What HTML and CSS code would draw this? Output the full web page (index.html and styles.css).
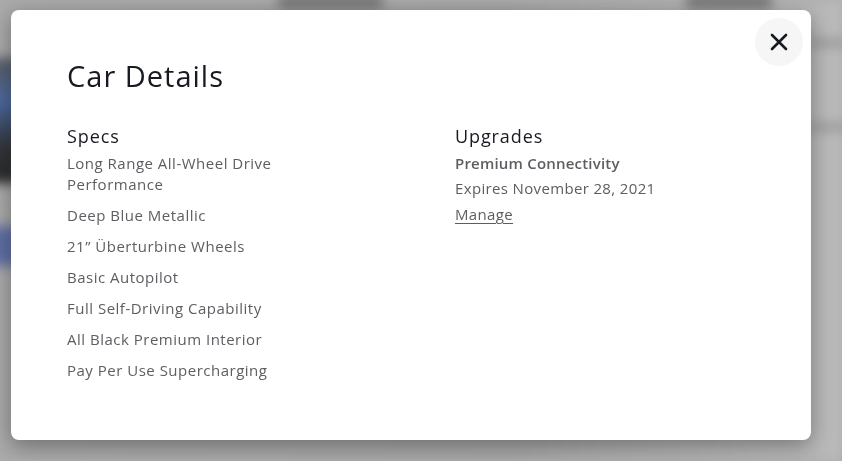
FILE: index.html
```html
<!DOCTYPE html>
<html lang="en">
<head>
    <meta charset="UTF-8">
    <meta name="viewport" content="width=device-width, initial-scale=1.0">
    <title>Car Details</title>
    <link rel="stylesheet" href="styles.css">
</head>
<body>

<!-- blurred page behind the modal -->
<div class="backdrop">
    <div class="bg-title bg-title-1"></div>
    <div class="bg-title bg-title-2"></div>
    <div class="bg-photo"></div>
    <div class="bg-button"></div>
    <div class="bg-line bg-line-1"></div>
    <div class="bg-line bg-line-2"></div>
</div>

<div class="modal-wrap">
    <div class="modal">
        <button class="close-btn" aria-label="Close">
            <svg width="18" height="18" viewBox="0 0 18 18">
                <path d="M2 2 L16 16 M16 2 L2 16" stroke="#171a20" stroke-width="2.6" stroke-linecap="round"/>
            </svg>
        </button>

        <h1 class="modal-title">Car Details</h1>

        <div class="details">
            <div class="details-col">
                <h2 class="col-title">Specs</h2>
                <ul class="spec-list">
                    <li>Long Range All-Wheel Drive Performance</li>
                    <li>Deep Blue Metallic</li>
                    <li>21” Überturbine Wheels</li>
                    <li>Basic Autopilot</li>
                    <li>Full Self-Driving Capability</li>
                    <li>All Black Premium Interior</li>
                    <li>Pay Per Use Supercharging</li>
                </ul>
            </div>
            <div class="details-col">
                <h2 class="col-title">Upgrades</h2>
                <div class="upgrade-name">Premium Connectivity</div>
                <div class="upgrade-text">Expires November 28, 2021</div>
                <a class="upgrade-link" href="#">Manage</a>
            </div>
        </div>
    </div>
</div>

</body>
</html>
```

FILE: styles.css
```css
* {
    margin: 0;
    padding: 0;
    box-sizing: border-box;
}

html, body {
    height: 100%;
    overflow: hidden;
    font-family: "Open Sans", sans-serif;
    background-color: #adadad;
}

/* Blurred page behind the modal */
.backdrop {
    position: fixed;
    inset: 0;
    background: linear-gradient(90deg, #a9a9a9 0%, #a6a6a6 60%, #bababa 100%);
    filter: blur(6px);
}

.bg-title {
    position: absolute;
    top: -4px;
    height: 12px;
    border-radius: 4px;
    background-color: #6e6e6e;
}
.bg-title-1 { left: 278px; width: 105px; }
.bg-title-2 { left: 686px; width: 86px; }

.bg-photo {
    position: absolute;
    left: -20px;
    top: 58px;
    width: 40px;
    height: 125px;
    background: linear-gradient(180deg, #5a5c62 0%, #4d6aa0 35%, #34363c 70%, #2a2a2a 100%);
}

.bg-button {
    position: absolute;
    left: -20px;
    top: 226px;
    width: 40px;
    height: 40px;
    background-color: #5f6fa4;
}

.bg-line {
    position: absolute;
    left: 810px;
    width: 60px;
    height: 6px;
    background-color: #8e8e8e;
}
.bg-line-1 { top: 40px; }
.bg-line-2 { top: 124px; }

/* Modal */
.modal-wrap {
    position: relative;
    padding: 10px 0 0 11px;
}

.modal {
    position: relative;
    width: 800px;
    height: 430px;
    background-color: #fff;
    border-radius: 8px;
    padding: 48px 56px;
    box-shadow: 0 6px 22px rgba(0, 0, 0, 0.35);
    color: #171a20;
}

.close-btn {
    position: absolute;
    top: 8px;
    right: 8px;
    width: 48px;
    height: 48px;
    border: none;
    border-radius: 50%;
    background-color: #f6f6f6;
    display: flex;
    align-items: center;
    justify-content: center;
}

.modal-title {
    font-size: 29px;
    font-weight: 400;
    line-height: 36px;
    letter-spacing: 1px;
    margin-bottom: 29px;
}

.details {
    display: grid;
    grid-template-columns: 388px 1fr;
}

.col-title {
    font-size: 18px;
    font-weight: 400;
    line-height: 26px;
    letter-spacing: 0.9px;
    margin-bottom: 4px;
}

.spec-list {
    list-style: none;
    max-width: 230px;
}

.spec-list li {
    font-size: 15px;
    line-height: 21px;
    letter-spacing: 0.5px;
    color: #5c5e62;
    margin-bottom: 10px;
}

.upgrade-name {
    font-size: 15px;
    font-weight: 600;
    line-height: 21px;
    letter-spacing: 0.2px;
    color: #5c5e62;
    margin-bottom: 4px;
}

.upgrade-text {
    font-size: 15px;
    line-height: 21px;
    letter-spacing: 0.35px;
    color: #5c5e62;
    margin-bottom: 4px;
}

.upgrade-link {
    font-size: 15px;
    line-height: 21px;
    letter-spacing: 0.35px;
    color: #5c5e62;
    text-decoration: underline;
    text-underline-offset: 3px;
}
```
